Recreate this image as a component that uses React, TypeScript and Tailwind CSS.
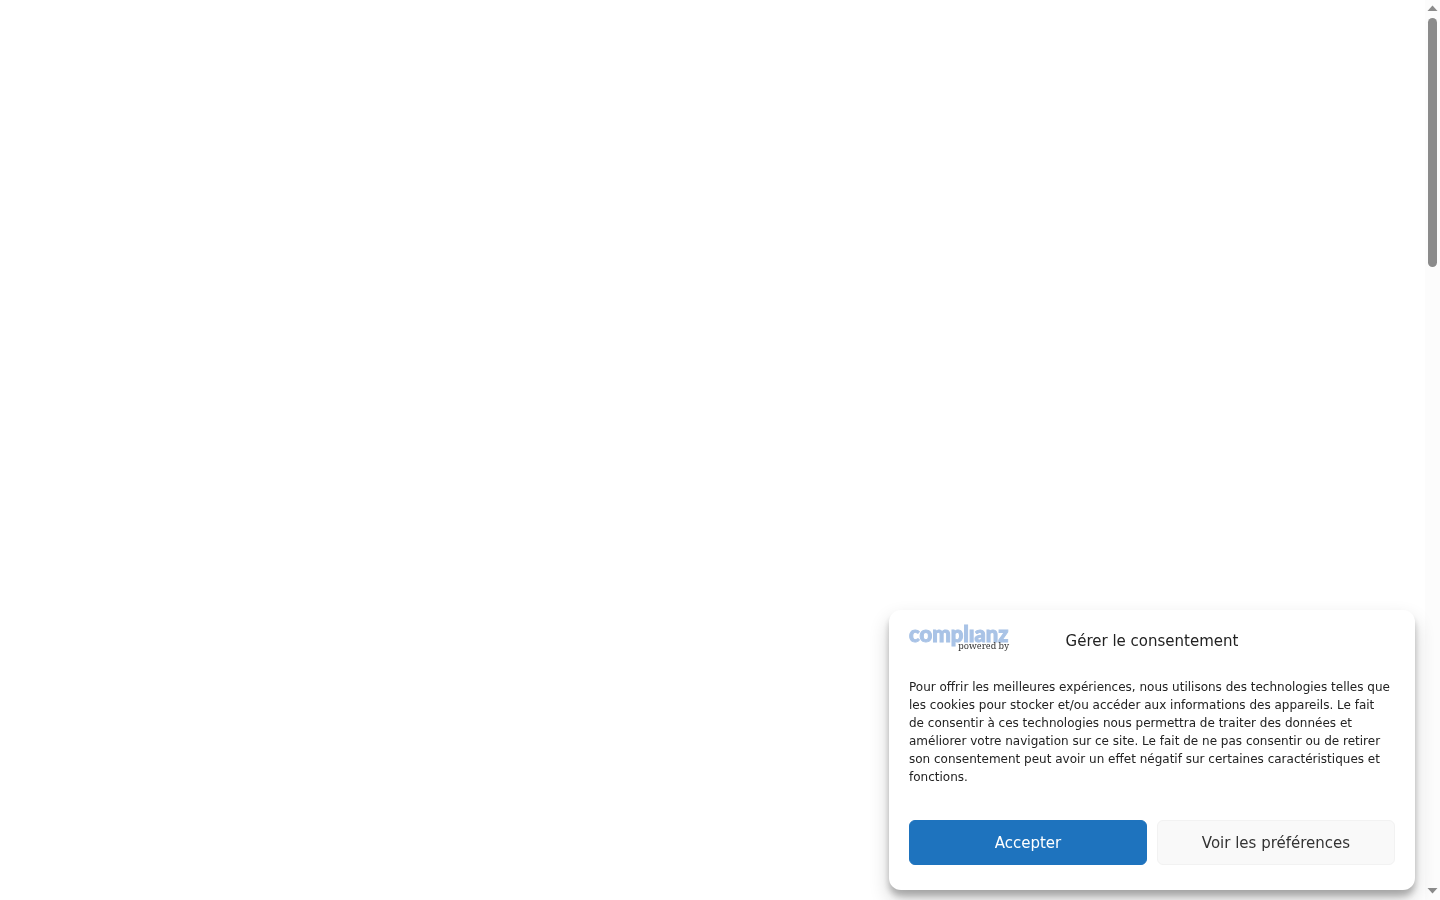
function ConsentLogo() {
  return (
    <a href="#complianz" aria-label="complianz powered by" className="flex w-[100px] flex-col">
      <span className="h-4 font-['Lato',sans-serif] text-[22px] leading-[18px] font-black text-[#a9c3e6] [-webkit-text-stroke:1px_#a9c3e6]">
        complıanz
      </span>
      <span className="text-right font-['Noto_Serif','DejaVu_Serif',serif] text-[9px] leading-[9px] text-[#333333]">
        powered by
      </span>
    </a>
  );
}

function ConsentBanner() {
  return (
    <section
      role="dialog"
      aria-labelledby="consent-title"
      aria-describedby="consent-message"
      className="fixed right-[25px] bottom-[10px] w-full max-w-[526px] rounded-xl bg-white px-5 pt-[15px] pb-[25px] text-[#222222] shadow-[0_10px_20px_rgba(0,0,0,0.19),0_6px_6px_rgba(0,0,0,0.23)]"
    >
      <header className="grid grid-cols-[100px_1fr_100px] items-start">
        <ConsentLogo />
        <h2 id="consent-title" className="text-center text-[15px] leading-8">
          Gérer le consentement
        </h2>
      </header>
      <p id="consent-message" className="mt-[21px] pr-1 text-xs leading-[18px]">
        Pour offrir les meilleures expériences, nous utilisons des technologies telles que les cookies pour stocker
        et/ou accéder aux informations des appareils. Le fait de consentir à ces technologies nous permettra de traiter
        des données et améliorer votre navigation sur ce site. Le fait de ne pas consentir ou de retirer son
        consentement peut avoir un effet négatif sur certaines caractéristiques et fonctions.
      </p>
      <div className="mt-[34px] grid grid-cols-2 gap-[10px]">
        <button
          type="button"
          className="h-[45px] rounded-md border border-[#1e73be] bg-[#1e73be] pt-0.5 text-[15px] text-white"
        >
          Accepter
        </button>
        <button
          type="button"
          className="h-[45px] rounded-md border border-[#f2f2f2] bg-[#f9f9f9] pt-0.5 text-[15px] text-[#333333]"
        >
          Voir les préférences
        </button>
      </div>
    </section>
  );
}

function ScrollTrack() {
  return (
    <div aria-hidden="true" className="flex w-[15px] flex-col items-center bg-[#fcfcfc]">
      <svg viewBox="0 0 15 18" className="h-[18px] w-[15px] shrink-0 fill-[#8b8b8b]">
        <path d="M2.5 11 7.5 5.5 12.5 11Z" />
      </svg>
      <div className="flex w-[9px] flex-1 flex-col">
        <div className="h-[249px] rounded-full bg-[#8b8b8b]" />
      </div>
      <svg viewBox="0 0 15 18" className="h-[18px] w-[15px] shrink-0 fill-[#8b8b8b]">
        <path d="M2.5 6 7.5 11.5 12.5 6Z" />
      </svg>
    </div>
  );
}

export default function App() {
  return (
    <div className="flex min-h-screen bg-white font-['DejaVu_Sans',sans-serif]">
      <main className="flex-1">
        <ConsentBanner />
      </main>
      <ScrollTrack />
    </div>
  );
}
